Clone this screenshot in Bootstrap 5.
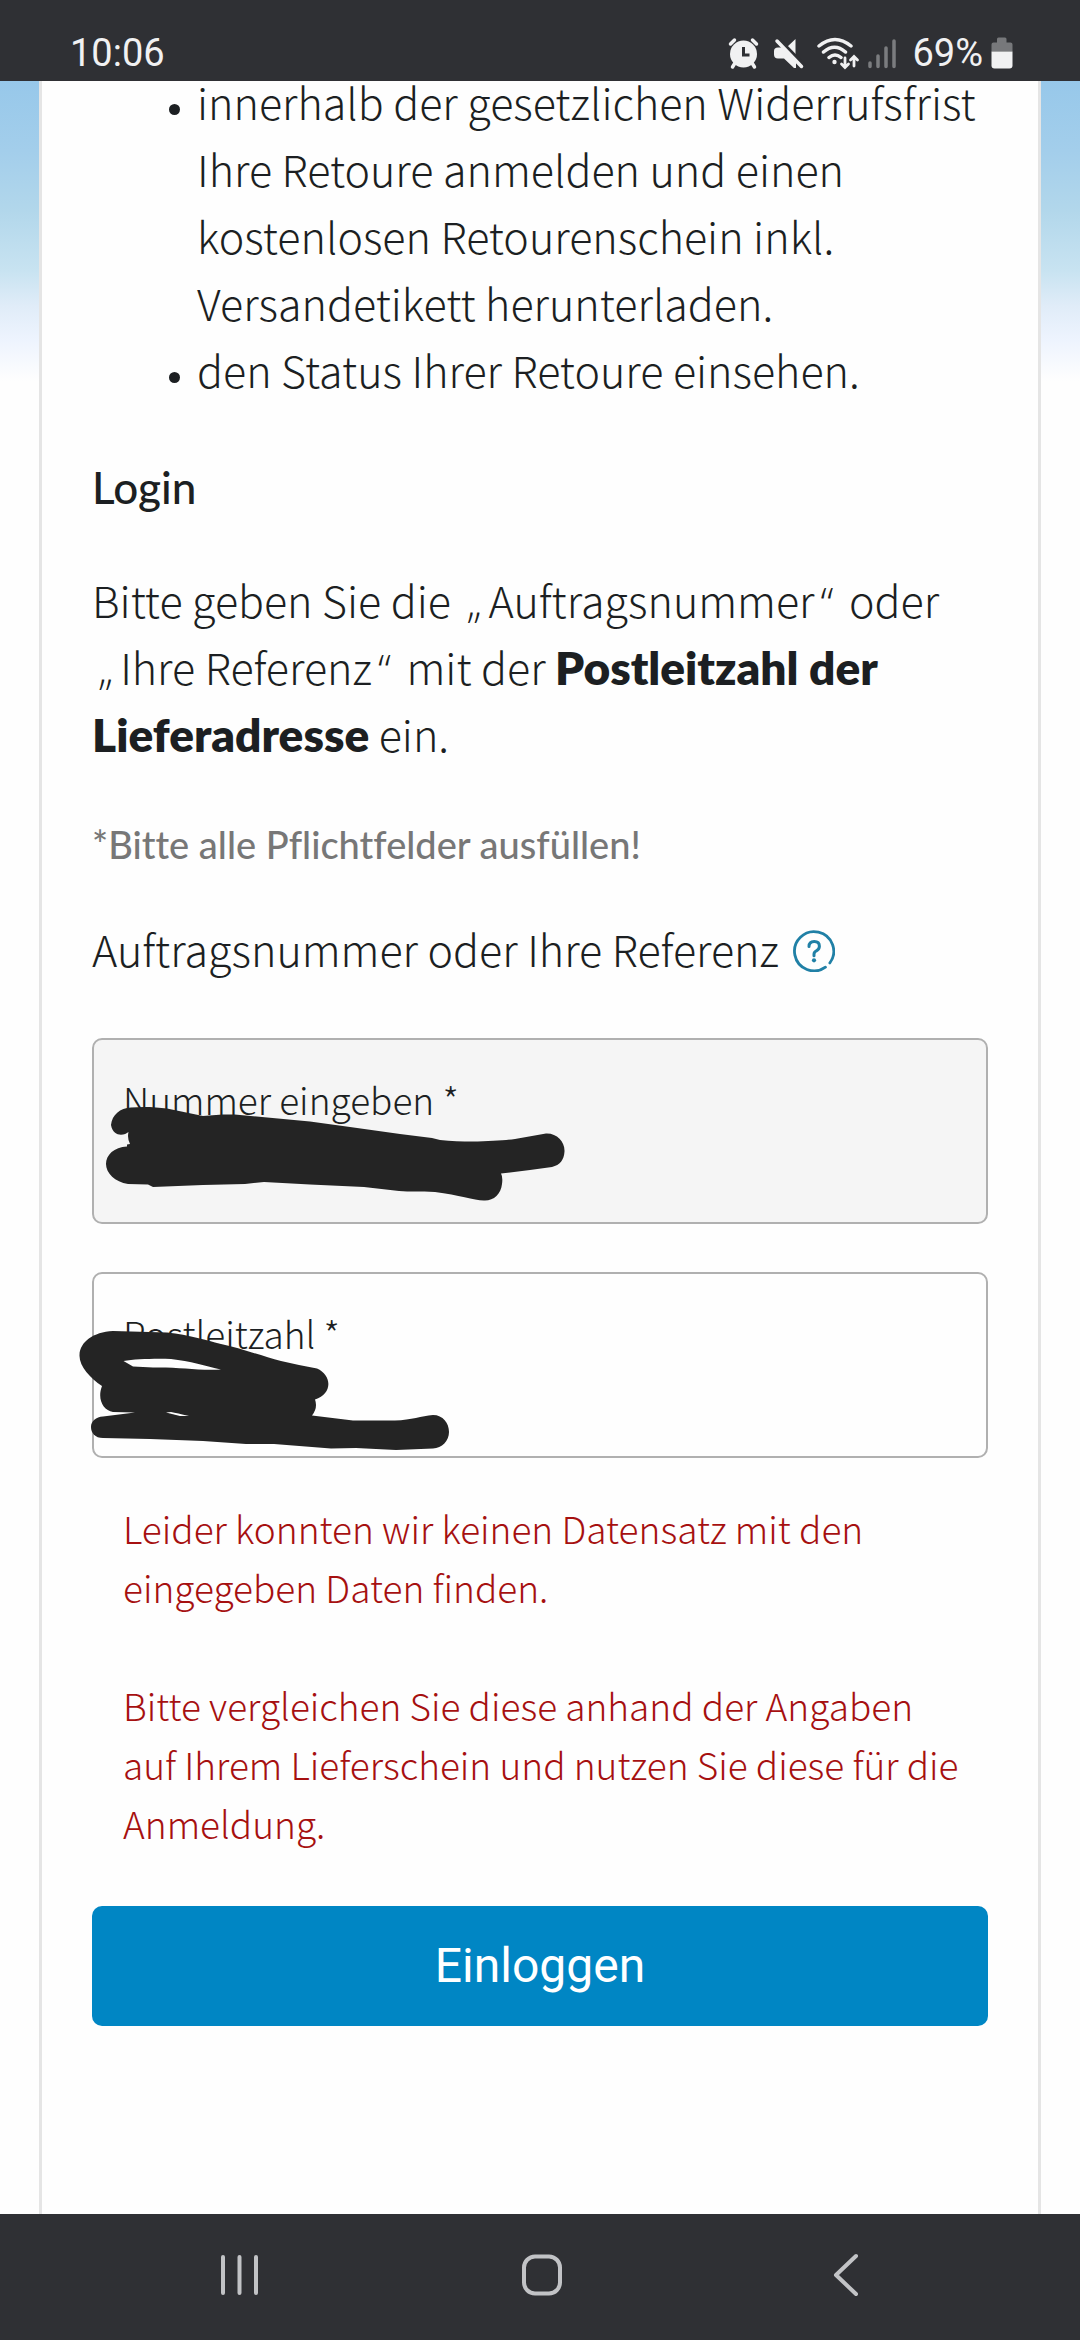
<!DOCTYPE html>
<html lang="de">
<head>
<meta charset="utf-8">
<meta name="viewport" content="width=device-width, initial-scale=1">
<title>Retoure – Login</title>
<link href="https://cdn.jsdelivr.net/npm/bootstrap@5.3.0/dist/css/bootstrap.min.css" rel="stylesheet">
<style>
  body { font-family: "Noto Sans CJK SC", "Open Sans", sans-serif; font-weight: 300; font-size: 43px; line-height: 67px; color: #1c1f22; background: #fefefe; }
  .system-bar { background: #2f3034; color: #f1f1f2; }
  .status-bar { height: 81px; padding: 25px 67px 0 70px; font-family: Roboto, sans-serif; font-weight: 400; font-size: 38px; line-height: 38px; }
  .page-sky { background: linear-gradient(#97c8ea 0, #a3ceeb 70px, #b2d7eb 130px, #c8e3f1 190px, #e0ecf8 225px, #eef4fe 260px, #fefefe 300px); }
  .sheet { margin: 0 39px; padding: 0 50px; background: #fefefe; border: solid #e5e5e5; border-width: 0 3px; }
  .benefits { margin: -13px 0 51px; padding-left: 105px; }
  .benefits li::marker { font-family: "Open Sans", sans-serif; font-size: 30px; }
  .login-title { font-family: Lato, sans-serif; font-weight: 500; font-size: 44px; line-height: 67px; margin-bottom: 45px; }
  .intro { margin-bottom: 48px; }
  .intro strong { font-family: Lato, sans-serif; font-weight: 800; font-size: 46px; line-height: 1; }
  .quote-mark { font-family: "Open Sans", sans-serif; line-height: 1; padding: 0 6px; }
  .required-note { font-family: Lato, sans-serif; font-weight: 500; font-size: 38px; line-height: 59px; font-variant-ligatures: none; color: #777; margin-bottom: 41px; }
  .field-title { margin-bottom: 56px; }
  .help-btn { margin: 5px 0 0 14px; }
  .field-box { height: 186px; padding: 30px 29px 0; border: 2px solid #b0b0b0; border-radius: 10px; }
  .field-box.filled { background: #f5f5f5; }
  .field-box label { font-size: 37px; line-height: 59px; }
  .field-box input { font-size: 37px; line-height: 59px; outline: 0; }
  .scribble { left: -2px; top: -2px; overflow: visible; pointer-events: none; fill: #242424; }
  .error-text { font-size: 37px; line-height: 59px; color: #a61010; padding: 0 16px 0 31px; margin: 41px 0 53px; }
  .error-text p { margin-bottom: 59px; }
  .login-btn { height: 120px; border-radius: 10px; font-family: Roboto, sans-serif; font-weight: 400; font-size: 48px; --bs-btn-bg: #0086c4; --bs-btn-color: #fff; --bs-btn-hover-bg: #0078b0; --bs-btn-hover-color: #fff; }
  .nav-keys { height: 126px; padding: 0 82px 0 86px; }
  .nav-keys button { height: 122px; }
</style>
<script src="https://cdn.jsdelivr.net/npm/bootstrap@5.3.0/dist/js/bootstrap.bundle.min.js"></script>
</head>
<body class="d-flex flex-column min-vh-100">

<header class="system-bar status-bar d-flex align-items-center justify-content-between flex-shrink-0">
  <div>10:06</div>
  <div class="d-flex align-items-center">
    <!-- alarm, muted, wifi and signal -->
    <svg width="170" height="38" viewBox="724 33 170 38" fill="none" stroke="#f1f1f2" stroke-linecap="round" aria-hidden="true">
      <circle cx="741.500" cy="53" r="13.500" fill="#f1f1f2" stroke="none"/>
      <path d="M728.500 43l4-4M754.500 43l-4-4M733 62l-2.500 4M750 62l2.500 4" stroke-width="3.500"/>
      <path d="M741.500 46v8h6" stroke="#2f3034" stroke-width="3" stroke-linecap="butt"/>
      <path d="M780 46.500L794 60v7h-2l-10-9.500h-6q-4 0-4-4v-3.500q0-3.500 4-3.500zM793.500 38v17.500l-9-9z" fill="#f1f1f2" stroke="none"/>
      <path d="M777.500 38.500l24.500 25" stroke="#2f3034" stroke-width="3"/>
      <path d="M775 40l24.500 25.500" stroke-width="3.500"/>
      <path d="M817 45q16-13 32 0M821.500 51q11-9.500 22 0M827 56.500q6-5 12 0" stroke-width="3.500"/>
      <circle cx="832.500" cy="61" r="2.200" fill="#f1f1f2" stroke="none"/>
      <path d="M843 57v9m-3.500-3l3.500 3.500 3.500-3.500M852 65v-9m-3.500 3l3.500-3.500 3.500 3.500" stroke-width="2.800"/>
      <path d="M868 62v3.500M876 55v10.500M884 47v18.500M892 40v25.500" stroke="#7b7c7f" stroke-width="3.500"/>
    </svg>
    <span class="ms-3">69%</span>
    <svg class="ms-2" width="22" height="38" viewBox="0 0 22 38" aria-hidden="true">
      <path d="M6 5q0-1.500 1.500-1.500h6.500q1.500 0 1.500 1.500v3.500h4q2 0 2 2v7h-21v-7q0-2 2-2h3.500z" fill="#77787b"/>
      <path d="M.5 17.500h21v14q0 3-3 3h-15q-3 0-3-3z" fill="#f1f1f2"/>
    </svg>
  </div>
</header>

<main class="page-sky d-flex flex-column flex-grow-1">
  <div class="sheet flex-grow-1">
    <ul class="benefits">
      <li>innerhalb der gesetzlichen Widerrufsfrist Ihre Retoure anmelden und einen kostenlosen Retourenschein inkl. Versandetikett herunterladen.</li>
      <li>den Status Ihrer Retoure einsehen.</li>
    </ul>

    <h2 class="login-title">Login</h2>
    <p class="intro">Bitte geben Sie die <span class="quote-mark">„</span>Auftragsnummer<span class="quote-mark">“</span> oder <span class="quote-mark">„</span>Ihre Referenz<span class="quote-mark">“</span> mit der <strong>Postleitzahl der Lieferadresse</strong> ein.</p>
    <p class="required-note">*Bitte alle Pflichtfelder ausfüllen!</p>

    <form onsubmit="return false">
      <div class="field-title d-flex align-items-center">
        Auftragsnummer oder Ihre Referenz
        <button type="button" class="help-btn btn p-0 border-0 d-flex" aria-label="Hilfe">
          <svg width="42" height="42" viewBox="0 0 42 42" fill="none" stroke="#2080a6" stroke-width="2.800" stroke-linecap="round" aria-hidden="true">
            <path d="M32.500 37.200A19.600 19.600 0 1 1 36.800 33"/>
            <path d="M16 16.500q0-5 5.200-5t5.200 4.800q0 3-3 4.500-2.400 1.300-2.400 3.500v1.500" stroke-width="3"/>
            <circle cx="21" cy="30.300" r="2.100" fill="#2080a6" stroke="none"/>
          </svg>
        </button>
      </div>

      <div class="field-box filled position-relative mb-5">
        <label class="d-block" for="nummer">Nummer eingeben *</label>
        <input class="d-block w-100 border-0 bg-transparent p-0" type="text" id="nummer" required>
        <svg class="scribble position-absolute" width="896" height="186" viewBox="92 1038 896 186" aria-hidden="true">
          <path d="M111 1125C112 1115 120 1108 131 1107.500C143 1106.500 156 1107 167 1108.500L203 1116C215 1115 228 1114 240 1115L310 1121.500L350 1127L400 1134L432 1138L440 1140C470 1143 500 1141 515 1139L546 1133.500C557 1133 565 1142 564.500 1151.500C564 1160 560 1165 552 1167L530 1170L501 1173.500Q503 1177 502 1184C501 1194 494 1200.500 485 1200.500C475 1201 460 1195 435 1192C420 1191 410 1192 399 1191L364 1187L310 1184.500L264 1182L245 1184L203 1185L153 1187L148 1184.500L128 1184C115 1182 106 1173 106 1164C106 1155 114 1147 127 1146.500L127 1144.500L130 1144Q127 1138 128.500 1132C124 1136 113 1137 111 1125Z"/>
        </svg>
      </div>

      <div class="field-box position-relative">
        <label class="d-block" for="plz">Postleitzahl *</label>
        <input class="d-block w-100 border-0 bg-transparent p-0" type="text" id="plz" required>
        <svg class="scribble position-absolute" width="896" height="186" viewBox="92 1272 896 186" aria-hidden="true">
          <path fill-rule="evenodd" d="M79.500 1355C80 1342 93 1332 113 1331L167 1332.500C190 1335 205 1340 221 1344C240 1348 262 1356 281 1361C293 1364 305 1366 317 1368.500C332 1375 333 1394 315 1399.500Q318 1408 312 1415.500L353 1420.500H395C412 1420 421 1416 433 1415C443 1415 449 1423 449 1432C449 1441 442 1448 433 1448.500L396 1450L356 1448L331 1448.500L274 1444H246L203 1441L150 1439L103 1438C95 1438 91 1433 91 1427C91 1421 96 1417 103 1416.500L135 1412.500L113 1412C103 1410 97 1399 102 1386C90 1378 79 1366 79.500 1355ZM123.500 1361C135 1359 155 1358.500 171 1359C190 1361 206 1366 221 1369.500C195 1370.500 180 1367 153 1367.500L133 1366.500ZM166 1412.500L180 1416L189 1416Q177 1413 171 1412Z"/>
        </svg>
      </div>

      <div class="error-text" role="alert">
        <p>Leider konnten wir keinen Datensatz mit den eingegeben Daten finden.</p>
        <p class="mb-0">Bitte vergleichen Sie diese anhand der Angaben auf Ihrem Lieferschein und nutzen Sie diese für die Anmeldung.</p>
      </div>

      <button type="submit" class="login-btn btn w-100 border-0">Einloggen</button>
    </form>
  </div>
</main>

<nav class="system-bar nav-keys d-flex justify-content-around flex-shrink-0" aria-label="Systemnavigation">
  <button type="button" class="btn border-0 px-5 py-0" aria-label="Letzte Apps">
    <svg width="42" height="44" viewBox="0 0 42 44" stroke="#c2c3c6" stroke-width="4" stroke-linecap="round" aria-hidden="true"><path d="M6 4v36M22.500 4v36M39 4v36"/></svg>
  </button>
  <button type="button" class="btn border-0 px-5 py-0" aria-label="Startseite">
    <svg width="42" height="44" viewBox="0 0 42 44" fill="none" stroke="#c2c3c6" stroke-width="4" aria-hidden="true"><rect x="3" y="3.500" width="36" height="37" rx="11"/></svg>
  </button>
  <button type="button" class="btn border-0 px-5 py-0" aria-label="Zurück">
    <svg width="42" height="44" viewBox="0 0 42 44" fill="none" stroke="#c2c3c6" stroke-width="4" stroke-linecap="round" stroke-linejoin="round" aria-hidden="true"><path d="M31 3L11 22l20 19"/></svg>
  </button>
</nav>
</body>
</html>
